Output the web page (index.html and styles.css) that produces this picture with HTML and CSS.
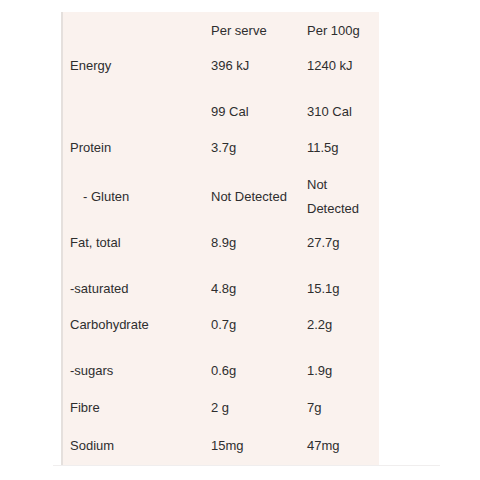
FILE: index.html
```html
<!DOCTYPE html>
<html>
<head>
<meta charset="utf-8">
<link rel="stylesheet" href="styles.css">
</head>
<body>
<div class="wrap">
  <div class="panel">
    <div class="row head"><div></div><div>Per serve</div><div>Per 100g</div></div>
    <div class="row tall"><div>Energy</div><div>396 kJ</div><div>1240 kJ</div></div>
    <div class="row"><div></div><div>99 Cal</div><div>310 Cal</div></div>
    <div class="row mid-gap"><div>Protein</div><div>3.7g</div><div>11.5g</div></div>
    <div class="row double"><div class="indent mid">- Gluten</div><div class="mid">Not Detected</div><div>Not Detected</div></div>
    <div class="row tall"><div>Fat, total</div><div>8.9g</div><div>27.7g</div></div>
    <div class="row"><div>-saturated</div><div>4.8g</div><div>15.1g</div></div>
    <div class="row tall"><div>Carbohydrate</div><div>0.7g</div><div>2.2g</div></div>
    <div class="row mid-gap"><div>-sugars</div><div>0.6g</div><div>1.9g</div></div>
    <div class="row loose"><div>Fibre</div><div>2 g</div><div>7g</div></div>
    <div class="row loose"><div>Sodium</div><div>15mg</div><div>47mg</div></div>
  </div>
  <div class="rule"></div>
</div>
</body>
</html>
```

FILE: styles.css
```css
html, body {
  margin: 0;
  padding: 0;
  background: #ffffff;
}

.wrap {
  padding-top: 12px;
  margin-left: 53px;
  width: 387px;
}

.panel {
  margin-left: 8px;
  width: 316px;
  background: #faf2ee;
  border-left: 2px solid #e5e0dd;
  font-family: "Liberation Sans", Arial, sans-serif;
  font-size: 13px;
  line-height: 24px;
  color: #2e2e2e;
}

.row {
  display: grid;
  grid-template-columns: 141px 96px 1fr;
  height: 36px;
  box-sizing: border-box;
  padding-top: 7px;
}

.row > div {
  padding-left: 7px;
  padding-right: 4px;
}

.row.head {
  height: 35px;
}

.row.mid-gap {
  height: 37px;
}

.row.tall {
  height: 46px;
}

.row.loose {
  height: 38px;
}

.row.double {
  height: 58px;
}

.row > .mid {
  align-self: center;
  margin-top: -7px;
  margin-bottom: -4px;
}

.row > .indent {
  padding-left: 20px;
}

.rule {
  height: 1px;
  background: #f0eeee;
}
```
